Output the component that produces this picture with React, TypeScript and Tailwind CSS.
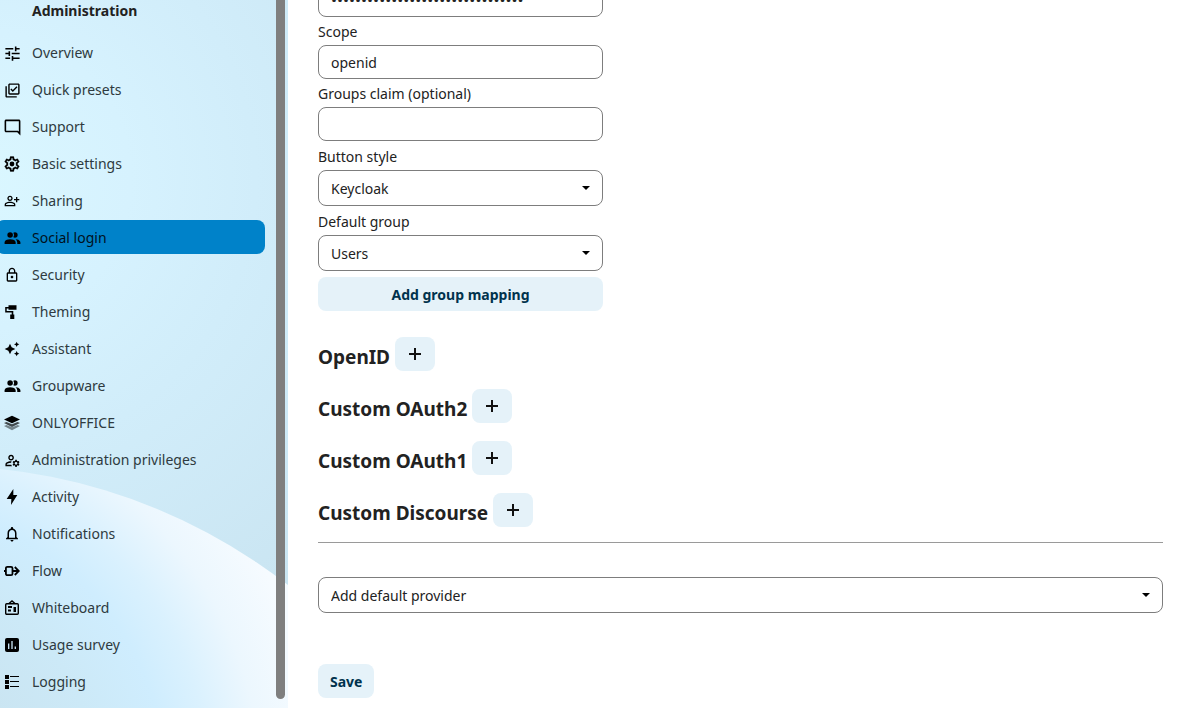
import {
  MdAutoAwesome,
  MdNotificationsNone,
  MdOutlineLibraryAddCheck,
  MdOutlineLock,
  MdOutlineManageAccounts,
  MdOutlineModeComment,
  MdOutlinePersonAddAlt,
  MdTune,
} from "react-icons/md";
import { useState } from "react";
import type { ReactNode } from "react";

function PeopleIcon() {
  return (
    <svg width="19" height="19" viewBox="0 0 24 24" fill="currentColor">
      <path d="M16 17v2H2v-2s0-4 7-4 7 4 7 4M12.5 7.5A3.5 3.5 0 1 0 9 11a3.5 3.5 0 0 0 3.5-3.5M15.94 13A5.32 5.32 0 0 1 18 17v2h4v-2s0-3.63-6.06-4M15 4a3.39 3.39 0 0 0-1.93.59 5 5 0 0 1 0 5.82A3.39 3.39 0 0 0 15 11a3.5 3.5 0 0 0 0-7" />
    </svg>
  );
}

// Cog outline with a solid hub
function GearIcon() {
  return (
    <svg width="18" height="18" viewBox="0 0 24 24" fill="currentColor">
      <circle cx="12" cy="12" r="3.2" />
      <path
        d="M10 22c-.25 0-.46-.18-.5-.42l-.37-2.65c-.63-.25-1.17-.59-1.69-.99l-2.49 1.01c-.22.08-.49 0-.61-.22l-2-3.46a.493.493 0 0 1 .12-.64l2.11-1.66L4.5 12l.07-1-2.11-1.63a.493.493 0 0 1-.12-.64l2-3.46c.12-.22.39-.31.61-.22l2.49 1c.52-.39 1.06-.73 1.69-.98l.37-2.65c.04-.24.25-.42.5-.42h4c.25 0 .46.18.5.42l.37 2.65c.63.25 1.17.59 1.69.98l2.49-1c.22-.09.49 0 .61.22l2 3.46c.13.22.07.49-.12.64L19.43 11l.07 1-.07 1 2.11 1.63c.19.15.25.42.12.64l-2 3.46c-.12.22-.39.31-.61.22l-2.49-1c-.52.39-1.06.73-1.69.98l-.37 2.65c-.04.24-.25.42-.5.42zm1.25-18-.37 2.61c-1.2.25-2.26.89-3.03 1.78L5.44 7.35l-.75 1.3L6.8 10.2a5.55 5.55 0 0 0 0 3.6l-2.12 1.56.75 1.3 2.43-1.04c.77.88 1.82 1.52 3.01 1.76l.37 2.62h1.52l.37-2.61c1.19-.25 2.24-.89 3.01-1.77l2.43 1.04.75-1.3-2.12-1.55c.4-1.17.4-2.44 0-3.61l2.11-1.55-.75-1.3-2.41 1.04a5.42 5.42 0 0 0-3.03-1.77L12.75 4z"
        stroke="currentColor"
        strokeWidth=".4"
      />
    </svg>
  );
}

function RollerIcon() {
  return (
    <svg width="16" height="16" viewBox="0 0 16 16" fill="currentColor">
      <path d="M4.500 1.300h8v4.400h-8V4.500H2.700v2.600h6.600v3.400h1V15H6.200v-4.500h1.500v-2H1.200V3h3.300z" />
    </svg>
  );
}

function LayersIcon() {
  return (
    <svg width="16" height="16" viewBox="0 0 16 16" fill="currentColor">
      <path opacity=".45" d="m0 11 2.500-1.100L8 12.300l5.500-2.400L16 11l-8 4.200z" />
      <path opacity=".7" d="m0 8 2.500-1.100L8 9.300l5.500-2.400L16 8l-8 4z" />
      <path d="m0 4.500 8-3.700 8 3.700-8 3.800z" />
    </svg>
  );
}

function BoltIcon() {
  return (
    <svg width="16" height="16" viewBox="0 0 24 24" fill="currentColor">
      <path d="M11 15H4L14 0v9h6l-9.500 15z" />
    </svg>
  );
}

function FlowIcon() {
  return (
    <svg width="16" height="16" viewBox="0 0 16 16" fill="none" stroke="currentColor" strokeWidth="1.8">
      <rect x="1.900" y="3.800" width="6.600" height="8.400" rx="1.5" />
      <path d="M0 8h2M8.500 8h6M10.800 4l4 4-4 4" />
    </svg>
  );
}

function WhiteboardIcon() {
  return (
    <svg width="16" height="16" viewBox="0 0 16 16" fill="none" stroke="currentColor" strokeWidth="1.4">
      <rect x="1.700" y="3.700" width="12.600" height="10.600" rx="1" />
      <path d="m5 3.500 3-2.500 3 2.500" />
      <path fill="currentColor" stroke="none" d="M4 6h4v2H4zM4 9.500h3v2H4zM9.500 7H12v5H9.500z" />
    </svg>
  );
}

function SurveyIcon() {
  return (
    <svg width="16" height="16" viewBox="0 0 16 16">
      <rect x="1" y="1" width="14" height="14" rx="2" fill="currentColor" />
      <path d="M4.700 6.500V12M8 4v8M11.300 9.500V12" stroke="#cdeafb" strokeWidth="1.3" />
    </svg>
  );
}

function LogIcon() {
  return (
    <svg width="16" height="16" viewBox="0 0 16 16" fill="currentColor">
      <path d="M1 1h4v4H1zM1 6h4v4H1zM1 11h4v4H1zM6 2h9v1H6zM6 7h9v1H6zM6 12h9v1H6z" />
    </svg>
  );
}

const navItems: { label: string; icon: ReactNode }[] = [
  { label: "Overview", icon: <MdTune size={19} /> },
  { label: "Quick presets", icon: <MdOutlineLibraryAddCheck size={17} /> },
  { label: "Support", icon: <MdOutlineModeComment size={19} /> },
  { label: "Basic settings", icon: <GearIcon /> },
  { label: "Sharing", icon: <MdOutlinePersonAddAlt size={16} /> },
  { label: "Social login", icon: <PeopleIcon /> },
  { label: "Security", icon: <MdOutlineLock size={16} /> },
  { label: "Theming", icon: <RollerIcon /> },
  { label: "Assistant", icon: <MdAutoAwesome size={16} /> },
  { label: "Groupware", icon: <PeopleIcon /> },
  { label: "ONLYOFFICE", icon: <LayersIcon /> },
  { label: "Administration privileges", icon: <MdOutlineManageAccounts size={17} /> },
  { label: "Activity", icon: <BoltIcon /> },
  { label: "Notifications", icon: <MdNotificationsNone size={18} /> },
  { label: "Flow", icon: <FlowIcon /> },
  { label: "Whiteboard", icon: <WhiteboardIcon /> },
  { label: "Usage survey", icon: <SurveyIcon /> },
  { label: "Logging", icon: <LogIcon /> },
];

const providerTypes = ["OpenID", "Custom OAuth2", "Custom OAuth1", "Custom Discourse"];

const inputClass =
  "block h-[34px] w-full rounded-lg border border-[#7d7d7d] bg-white px-3 text-[#222]";

// Wallpaper behind the navigation: soft sky with a bright disc rising from the bottom left
function Wallpaper() {
  return (
    <svg
      aria-hidden="true"
      className="absolute inset-0 h-full w-full"
      viewBox="0 0 288 708"
      preserveAspectRatio="xMinYMin slice"
    >
      <defs>
        <radialGradient id="sky" gradientUnits="userSpaceOnUse" cx="-20" cy="180" r="500">
          <stop offset="0" stopColor="#daf7ff" />
          <stop offset=".3" stopColor="#d6f2fe" />
          <stop offset=".55" stopColor="#d1edfa" />
          <stop offset="1" stopColor="#cae5f2" />
        </radialGradient>
        <radialGradient id="disc" gradientUnits="userSpaceOnUse" cx="-110" cy="780" r="430">
          <stop offset=".3" stopColor="#cae5f2" />
          <stop offset=".48" stopColor="#cce9f7" />
          <stop offset=".64" stopColor="#cfedfe" />
          <stop offset=".74" stopColor="#daf1fe" />
          <stop offset=".86" stopColor="#ecf7fe" />
          <stop offset="1" stopColor="#f6fbff" />
        </radialGradient>
      </defs>
      <rect width="288" height="708" fill="url(#sky)" />
      <circle cx="-59" cy="1031" r="565" fill="url(#disc)" />
    </svg>
  );
}

interface SelectBoxProps {
  id: string;
  options: string[];
  label?: string;
}

function SelectBox({ id, options, label }: SelectBoxProps) {
  return (
    <div className="relative">
      <select
        id={id}
        aria-label={label}
        className="block h-9 w-full appearance-none rounded-lg border border-[#7d7d7d] bg-white px-3 text-[#222]"
      >
        {options.map((o) => (
          <option key={o}>{o}</option>
        ))}
      </select>
      <svg
        className="pointer-events-none absolute top-4 right-3"
        width="10"
        height="4"
        viewBox="0 0 10 4"
      >
        <path d="M1 0h8L5 4z" />
      </svg>
    </div>
  );
}

function FieldLabel({ htmlFor, children }: { htmlFor: string; children: ReactNode }) {
  return (
    <label htmlFor={htmlFor} className="block pt-1 pb-0.5 leading-[22px]">
      {children}
    </label>
  );
}

export default function App() {
  const [active, setActive] = useState("Social login");
  const [secret, setSecret] = useState("k3ycl0aks3cr3tk3ycl0aks3cr3tabcd");
  const [scope, setScope] = useState("openid");
  const [claim, setClaim] = useState("");

  return (
    <div className="flex min-h-screen bg-white font-['Noto_Sans',sans-serif] text-[14px] text-[#222]">
      <aside className="relative flex w-72 shrink-0 overflow-hidden">
        <Wallpaper />
        <nav className="relative flex-1 pr-[11px] pb-2">
          <h2 className="mb-[13px] pl-8 leading-[22px] font-bold">Administration</h2>
          <ul className="-ml-1 flex flex-col gap-[3px]">
            {navItems.map((item) => (
              <li key={item.label}>
                <a
                  href="#"
                  onClick={(e) => {
                    e.preventDefault();
                    setActive(item.label);
                  }}
                  className={`flex h-[34px] items-center gap-3 rounded-lg pl-2 ${
                    active === item.label ? "bg-[#0082c9] text-[#00111c]" : "text-[#2e3a40]"
                  }`}
                >
                  <span className="flex h-5 w-4 shrink-0 items-center justify-center pt-0.5 text-black [&>svg]:shrink-0">
                    {item.icon}
                  </span>
                  {item.label}
                </a>
              </li>
            ))}
          </ul>
        </nav>
        <div className="relative mr-[3px] mb-[9px] w-[9px] rounded-b-full bg-[#7f7f7f]" />
      </aside>

      <main className="min-w-0 flex-1 overflow-hidden pr-7 pl-[30px]">
        <form onSubmit={(e) => e.preventDefault()}>
          <div className="-mt-[17px] max-w-[285px]">
            <input
              type="password"
              aria-label="Client Secret"
              className={`${inputClass} text-[16px]`}
              value={secret}
              onChange={(e) => setSecret(e.target.value)}
            />
            <FieldLabel htmlFor="scope">Scope</FieldLabel>
            <input
              id="scope"
              className={inputClass}
              value={scope}
              onChange={(e) => setScope(e.target.value)}
            />
            <FieldLabel htmlFor="claim">Groups claim (optional)</FieldLabel>
            <input
              id="claim"
              className={inputClass}
              value={claim}
              onChange={(e) => setClaim(e.target.value)}
            />
            <div className="mt-px">
              <FieldLabel htmlFor="style">Button style</FieldLabel>
              <SelectBox id="style" options={["Keycloak", "None"]} />
            </div>
            <div className="mt-px">
              <FieldLabel htmlFor="group">Default group</FieldLabel>
              <SelectBox id="group" options={["Users", "None"]} />
            </div>
            <button
              type="button"
              className="mt-1.5 h-[34px] w-full rounded-lg bg-[#e5f2f9] font-bold text-[#00324d]"
            >
              Add group mapping
            </button>
          </div>

          <div className="mt-[26px] flex flex-col gap-[18px]">
            {providerTypes.map((name) => (
              <div key={name} className="flex items-end gap-[5px]">
                <h2 className="text-[19px] leading-7 font-bold">{name}</h2>
                <button
                  type="button"
                  aria-label={`Add ${name}`}
                  className="flex h-[34px] w-10 items-center justify-center rounded-lg bg-[#e5f2f9]"
                >
                  <svg width="12" height="12" viewBox="0 0 12 12">
                    <path d="M5 0h2v5h5v2H7v5H5V7H0V5h5z" fill="#111" />
                  </svg>
                </button>
              </div>
            ))}
          </div>

          <hr className="mt-[15px] mb-[34px] border-[#9a9a9a]" />

          <SelectBox
            id="provider"
            label="Add default provider"
            options={["Add default provider", "Google", "GitHub"]}
          />

          <button
            type="submit"
            className="mt-[51px] h-[34px] rounded-lg bg-[#e5f2f9] px-3 font-bold text-[#00324d]"
          >
            Save
          </button>
        </form>
      </main>
    </div>
  );
}
